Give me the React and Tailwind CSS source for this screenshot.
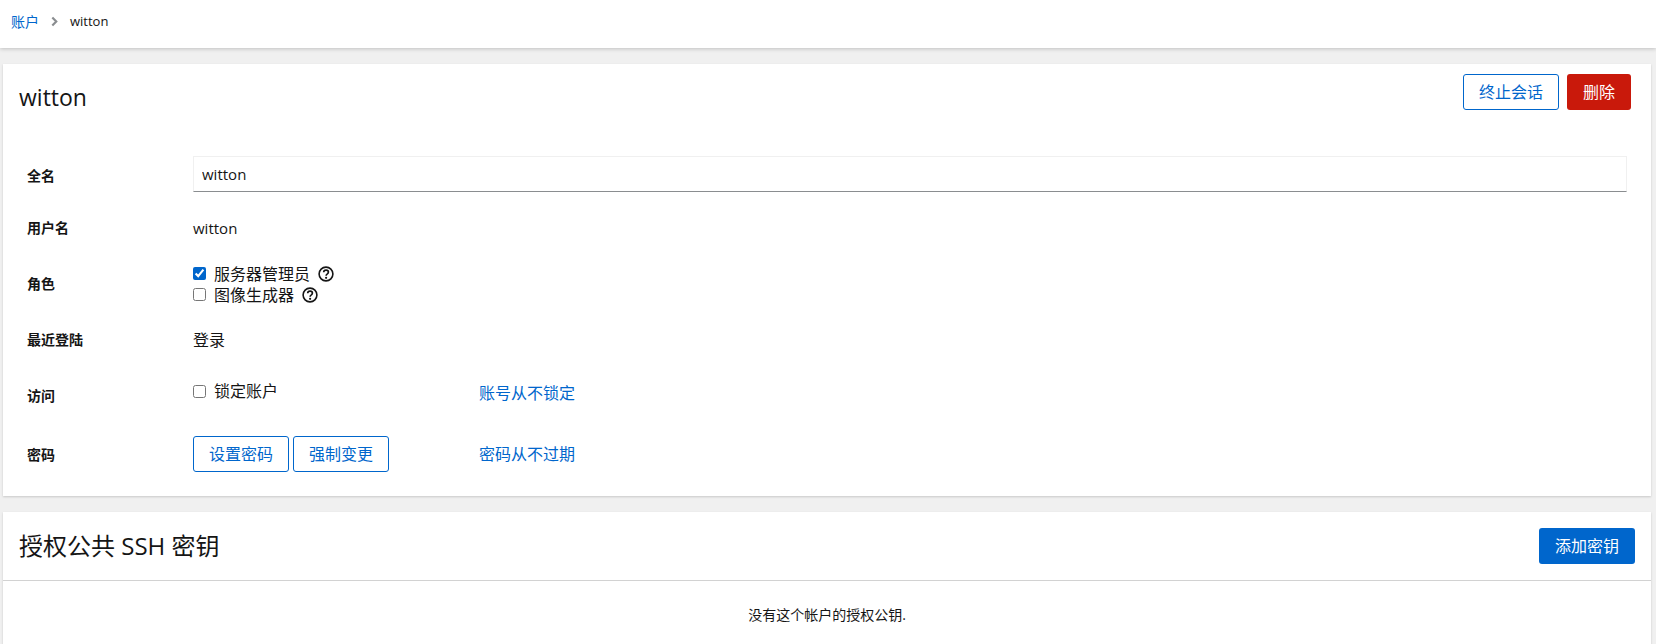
import { useState } from 'react'

const font = "font-['Open_Sans','Noto_Sans_CJK_SC',sans-serif]"

const HelpIcon = () => (
  <svg viewBox="0 0 16 16" className="w-4 h-4 ml-2 text-[#151515]" fill="none">
    <circle cx="8" cy="8" r="6.9" stroke="currentColor" strokeWidth="1.6" />
    <path d="M5.7 6.3c0-1.4 1-2.2 2.4-2.2 1.3 0 2.3.8 2.3 2 0 1-.6 1.5-1.3 2-.6.4-.9.7-.9 1.4v.2" stroke="currentColor" strokeWidth="1.7" />
    <circle cx="8.1" cy="11.8" r="1.1" fill="currentColor" />
  </svg>
)

const Check = ({ checked, label, help }) => {
  const [on, setOn] = useState(checked)
  return (
    <label className="flex items-center h-[21px] text-[#151515]">
      <input
        type="checkbox"
        checked={on}
        onChange={(e) => setOn(e.target.checked)}
        className="w-[13px] h-[13px] mr-2 accent-[#0066cc]"
      />
      <span>{label}</span>
      {help && <HelpIcon />}
    </label>
  )
}

const Row = ({ label, className, labelClass = '', children }) => (
  <div className={`flex items-center ${className}`}>
    <div className={`w-[190px] pl-6 text-sm font-bold text-[#151515] ${labelClass}`}>{label}</div>
    {children}
  </div>
)

const OutlineButton = ({ children, className = '' }) => (
  <button className={`h-9 border border-[#0066cc] rounded-[3px] bg-white text-[#0066cc] text-base ${className}`}>
    {children}
  </button>
)

export default function App() {
  return (
    <div className={`h-[644px] overflow-hidden bg-[#f0f0f0] text-base ${font}`}>
      <nav className="h-12 bg-white shadow-[0_1px_4px_rgba(3,3,3,0.2)] flex items-center pl-[11px] pb-[5px]">
        <a className="text-[#0066cc] text-sm">账户</a>
        <svg viewBox="0 0 8 12" className="w-[7px] h-[11px] ml-[12px] mr-[12px] text-[#8a8d90]" fill="none">
          <path d="M1.5 1.5 6 6l-4.5 4.5" stroke="currentColor" strokeWidth="2.5" />
        </svg>
        <span className="text-[#151515] text-[13px]">witton</span>
      </nav>

      <main className="pl-[3px] pt-4 pr-[5px]">
        <section className="h-[432px] bg-white shadow-[0_1px_2px_rgba(3,3,3,0.16)]">
          <header className="flex justify-between pt-[10px] pl-[16px] pr-5 h-[92px]">
            <h1 className="text-[23px] leading-[46px] text-[#151515]">witton</h1>
            <div className="flex gap-2">
              <OutlineButton className="w-[96px]">终止会话</OutlineButton>
              <button className="w-16 h-9 rounded-[3px] bg-[#c9190b] text-white text-base">删除</button>
            </div>
          </header>

          <div className="flex flex-col">
            <Row label="全名" className="h-9" labelClass="pt-[3px]">
              <input
                readOnly
                value="witton"
                className="w-[1434px] h-9 px-2 border border-[#f0f0f0] border-b-[#8a8d90] text-[15px] text-[#151515] outline-none"
              />
            </Row>
            <Row label="用户名" className="h-6 mt-6">
              <span className="text-[15px] text-[#151515]">witton</span>
            </Row>
            <Row label="角色" className="h-[42px] mt-[23px]">
              <div>
                <Check checked label="服务器管理员" help />
                <Check label="图像生成器" help />
              </div>
            </Row>
            <Row label="最近登陆" className="h-6 mt-[23px]">
              <span className="text-[#151515]">登录</span>
            </Row>
            <Row label="访问" className="h-6 mt-[32px]">
              <div className="w-[286px] -mt-[10px]">
                <Check label="锁定账户" />
              </div>
              <a className="text-[#0066cc] -mt-[6px]">账号从不锁定</a>
            </Row>
            <Row label="密码" className="h-9 mt-[28px]" labelClass="pt-[2px]">
              <div className="w-[286px] flex gap-1">
                <OutlineButton className="w-[96px]">设置密码</OutlineButton>
                <OutlineButton className="w-[96px]">强制变更</OutlineButton>
              </div>
              <a className="text-[#0066cc]">密码从不过期</a>
            </Row>
          </div>
        </section>

        <section className="mt-4 h-[200px] bg-white shadow-[0_1px_2px_rgba(3,3,3,0.16)]">
          <header className="h-[69px] flex items-center justify-between pl-4 pr-4 pb-[1px] border-b border-[#d2d2d2]">
            <h2 className="text-2xl text-[#151515]">授权公共 SSH 密钥</h2>
            <button className="w-[96px] h-9 rounded-[3px] bg-[#0066cc] text-white text-base">添加密钥</button>
          </header>
          <p className="mt-[24px] text-center text-sm text-[#151515]">没有这个帐户的授权公钥.</p>
        </section>
      </main>
    </div>
  )
}
